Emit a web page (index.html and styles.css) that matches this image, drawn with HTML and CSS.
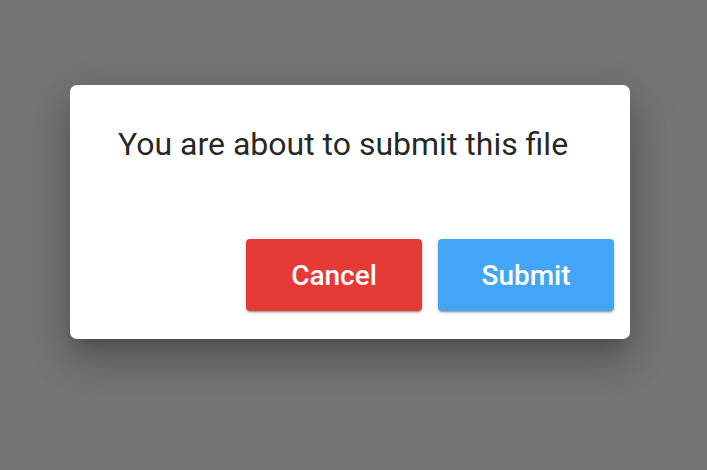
FILE: index.html
```html
<!DOCTYPE html>
<html lang="en">
<head>
<meta charset="UTF-8">
<meta name="viewport" content="width=device-width, initial-scale=1.0">
<title>Submit file</title>
<link rel="stylesheet" href="styles.css">
</head>
<body>
<div class="overlay">
    <div class="dialog">
        <p class="dialog-text">You are about to submit this file</p>
        <div class="dialog-actions">
            <button class="btn btn-cancel">Cancel</button>
            <button class="btn btn-submit">Submit</button>
        </div>
    </div>
</div>
</body>
</html>
```

FILE: styles.css
```css
body {
    margin: 0;
    padding: 0;
    font-family: Roboto, "Liberation Sans", sans-serif;
    background-color: #757575;
}
.overlay {
    height: 470px;
    padding: 85px 0 0 70px;
    box-sizing: border-box;
}
.dialog {
    width: 560px;
    height: 254px;
    box-sizing: border-box;
    background-color: #fff;
    border-radius: 7px;
    box-shadow: 0 24px 38px 3px rgba(0, 0, 0, 0.14), 0 9px 46px 8px rgba(0, 0, 0, 0.12), 0 11px 15px -7px rgba(0, 0, 0, 0.2);
    padding: 39px 16px 28px 48px;
    display: flex;
    flex-direction: column;
}
.dialog-text {
    margin: 0;
    font-size: 32px;
    line-height: 40px;
    color: rgba(0, 0, 0, 0.87);
}
.dialog-actions {
    margin-top: auto;
    display: flex;
    justify-content: flex-end;
    gap: 16px;
}
.btn {
    width: 176px;
    height: 72px;
    padding: 0;
    border: none;
    border-radius: 4px;
    color: #fff;
    font-family: Roboto, "Liberation Sans", sans-serif;
    font-size: 28px;
    font-weight: 500;
    cursor: pointer;
    box-shadow: 0 3px 1px -2px rgba(0, 0, 0, 0.2), 0 2px 2px 0 rgba(0, 0, 0, 0.14), 0 1px 5px 0 rgba(0, 0, 0, 0.12);
}
.btn-cancel {
    background-color: #e53935;
}
.btn-submit {
    background-color: #42a5f5;
}
```
